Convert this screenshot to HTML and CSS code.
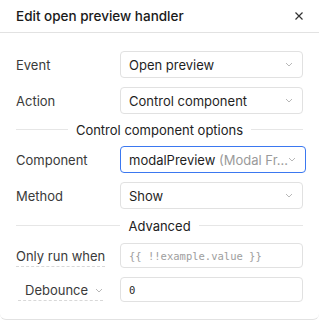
FILE: index.html
```html
<!DOCTYPE html>
<html>
<head>
<meta charset="utf-8">
<link rel="stylesheet" href="styles.css">
</head>
<body>
<div class="panel">
  <div class="header">
    <span class="title">Edit open preview handler</span>
    <svg class="close" width="10" height="10" viewBox="0 0 10 10"><path d="M1.5 1.5L8.5 8.5M8.5 1.5L1.5 8.5" stroke="#333" stroke-width="1.2" fill="none"/></svg>
  </div>
  <div class="body">
    <div class="row">
      <span class="label">Event</span>
      <div class="select"><span class="val">Open preview</span><svg class="chev" width="8" height="5" viewBox="0 0 8 5"><path d="M1 1l3 3 3-3" stroke="#b8b8b8" stroke-width="1" fill="none"/></svg></div>
    </div>
    <div class="row">
      <span class="label">Action</span>
      <div class="select"><span class="val">Control component</span><svg class="chev" width="8" height="5" viewBox="0 0 8 5"><path d="M1 1l3 3 3-3" stroke="#b8b8b8" stroke-width="1" fill="none"/></svg></div>
    </div>
    <div class="divider first"><span>Control component options</span></div>
    <div class="row">
      <span class="label">Component</span>
      <div class="select focus"><span class="val">modalPreview <span class="muted">(Modal Fr...</span></span><svg class="chev" width="8" height="5" viewBox="0 0 8 5"><path d="M1 1l3 3 3-3" stroke="#b8b8b8" stroke-width="1" fill="none"/></svg></div>
    </div>
    <div class="row">
      <span class="label">Method</span>
      <div class="select"><span class="val">Show</span><svg class="chev" width="8" height="5" viewBox="0 0 8 5"><path d="M1 1l3 3 3-3" stroke="#b8b8b8" stroke-width="1" fill="none"/></svg></div>
    </div>
    <div class="divider adv"><span>Advanced</span></div>
    <div class="row small">
      <span class="label"><span class="dashed">Only run when</span></span>
      <div class="input code placeholder">{{ !!example.value }}</div>
    </div>
    <div class="row small">
      <span class="label deb"><span class="dashed">Debounce <svg class="chev2" width="8" height="5" viewBox="0 0 8 5"><path d="M1 1l3 3 3-3" stroke="#b8b8b8" stroke-width="1" fill="none"/></svg></span></span>
      <div class="input code">0</div>
    </div>
  </div>
</div>
</body>
</html>
```

FILE: styles.css
```css
html, body {
  margin: 0;
  padding: 0;
  background: #fff;
}
body {
  font-family: Inter, "Noto Sans", sans-serif;
  font-size: 13px;
  color: #1f1f1f;
}
.panel {
  width: 319px;
  height: 320px;
  box-sizing: border-box;
  border-bottom: 1px solid #e2e2e2;
  border-radius: 0 0 6px 6px;
}
.header {
  height: 33px;
  box-sizing: border-box;
  border-bottom: 1px solid #e2e2e2;
  display: flex;
  align-items: center;
  justify-content: space-between;
  padding: 0 16px 0 16px;
}
.title {
  font-size: 13.5px;
  font-weight: 500;
  color: #1a1a1a;
}
.close {
  margin-right: -1px;
}
.body {
  padding: 18px 16px 0 16px;
}
.row {
  display: flex;
  align-items: center;
  height: 27px;
  margin-bottom: 9px;
}
.row.small {
  height: 25px;
}
.label {
  width: 104px;
  flex: none;
  color: #3a3a3a;
}
.select, .input {
  flex: 1;
  height: 100%;
  box-sizing: border-box;
  border: 1px solid #e1e1e1;
  border-radius: 4px;
  display: flex;
  align-items: center;
  padding: 0 9px 0 8px;
}
.select .val {
  flex: 1;
  white-space: nowrap;
  overflow: hidden;
}
.select.focus {
  border-color: #3b78f0;
}
.muted {
  color: #9a9a9a;
}
.chev {
  flex: none;
}
.divider {
  display: flex;
  align-items: center;
  gap: 8px;
  height: 15px;
  margin: -1px 0 9px 0;
  color: #222;
}
.divider::before, .divider::after {
  content: "";
  flex: 1;
  height: 1px;
  background: #e6e6e6;
}
.divider.adv {
  margin-top: 1px;
  margin-bottom: 10px;
}
.code {
  font-family: "DejaVu Sans Mono", monospace;
  font-size: 10.5px;
  color: #1f1f1f;
}
.placeholder {
  color: #9e9e9e;
}
.dashed {
  border-bottom: 1px dashed #d8d8d8;
  padding-bottom: 2px;
}
.deb {
  padding-left: 2px;
  box-sizing: border-box;
}
.deb .dashed {
  padding-left: 7px;
}
.chev2 {
  margin-left: 3px;
  vertical-align: middle;
}
```
